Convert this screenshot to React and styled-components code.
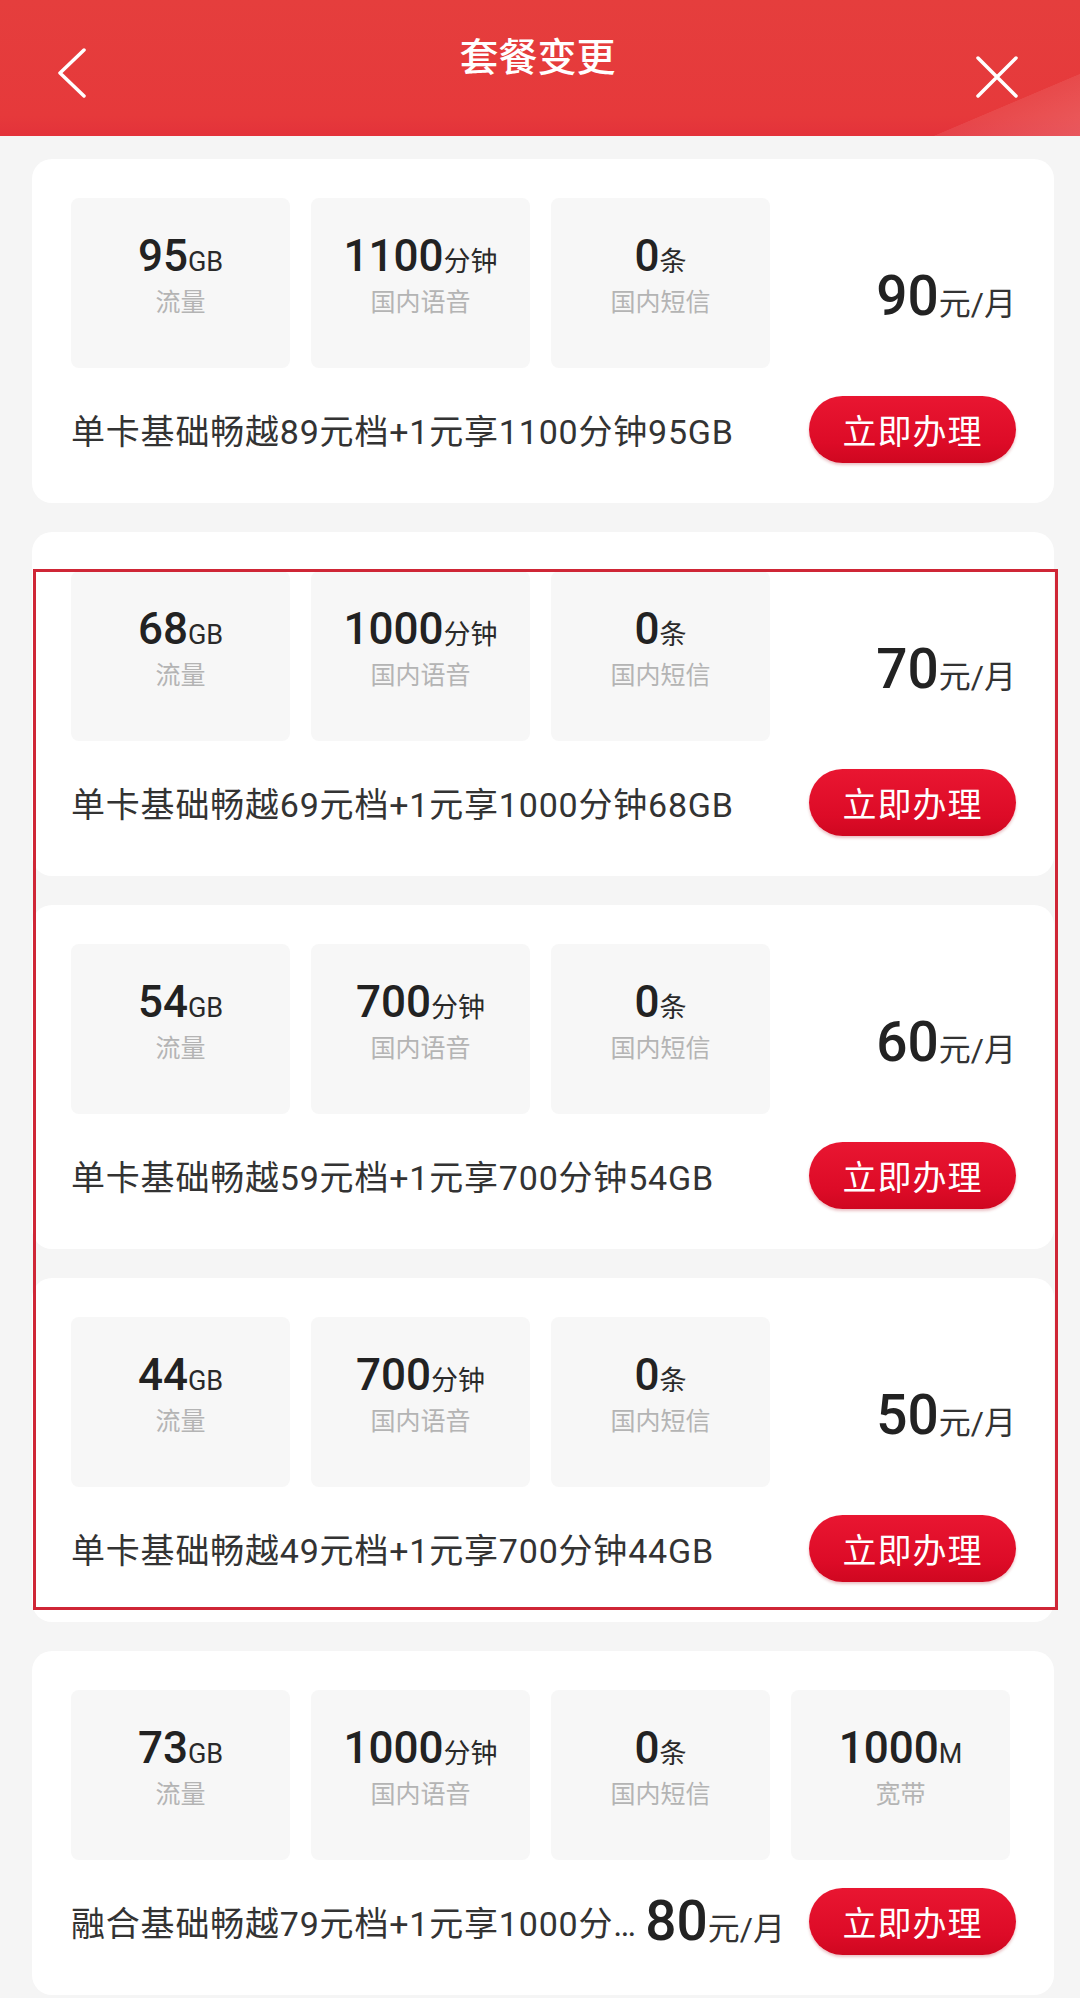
import React from 'react';
import styled, { createGlobalStyle } from 'styled-components';

const GlobalStyle = createGlobalStyle`
    body {
        margin: 0;
        background: #f5f5f5;
        font-family: Roboto, "Noto Sans CJK SC", sans-serif;
    }
`;

const Page = styled.div`
    width: 1080px;
    height: 1998px;
    overflow: hidden;
    background: #f5f5f5;
`;

const Header = styled.header`
    height: 136px;
    display: grid;
    grid-template-columns: 1fr auto 1fr;
    align-items: start;
    padding: 0 62px 0 57px;
    box-sizing: border-box;
    background:
        linear-gradient(157deg, transparent 89.5%, rgba(255, 255, 255, 0.08) 89.6%, rgba(255, 255, 255, 0.18) 100%),
        linear-gradient(180deg, #e53e3d 0%, #e6393b 85%, #e3323a 100%);
`;

const IconButton = styled.button`
    justify-self: ${p => (p.$end ? 'end' : 'start')};
    margin-top: ${p => p.$top}px;
    padding: 0;
    border: none;
    background: none;
    display: flex;
    cursor: pointer;
`;

const Title = styled.h1`
    margin: 35px 0 0;
    font-family: "Noto Sans CJK SC", sans-serif;
    font-size: 39px;
    font-weight: 500;
    line-height: 1;
    color: #fff;
`;

const List = styled.main`
    display: flex;
    flex-direction: column;
    gap: 29px;
    padding: 23px 26px 0 32px;
`;

const Highlight = styled.section`
    position: relative;
    display: flex;
    flex-direction: column;
    gap: 29px;
`;

const Frame = styled.div`
    position: absolute;
    top: 37px;
    bottom: 12px;
    left: 1px;
    right: -4px;
    border: 3px solid #cf2636;
    pointer-events: none;
`;

const Card = styled.article`
    background: #fff;
    border-radius: 20px;
    padding: 39px 38px 40px 39px;
    height: 344px;
    box-sizing: border-box;
`;

const StatRow = styled.div`
    display: flex;
    gap: 21px;
`;

const StatBox = styled.div`
    width: 219px;
    height: 170px;
    box-sizing: border-box;
    padding-top: 36px;
    border-radius: 8px;
    background: #f7f7f7;
    display: flex;
    flex-direction: column;
    align-items: center;
`;

const Value = styled.div`
    font-size: 44px;
    line-height: 1;
    font-weight: 500;
    color: #222;
    white-space: nowrap;
`;

const Unit = styled.span`
    font-size: 27px;
    font-weight: 400;
    color: #2a2a2a;
`;

const Label = styled.div`
    margin-top: 12px;
    font-size: 25px;
    line-height: 1;
    color: #b4b4b4;
`;

const Price = styled.div`
    margin-left: ${p => (p.$inline ? '0' : 'auto')};
    margin-top: ${p => (p.$inline ? '0' : '71px')};
    align-self: ${p => (p.$inline ? 'center' : 'flex-start')};
    font-size: 55px;
    line-height: 1;
    font-weight: 500;
    color: #222;
    white-space: nowrap;
    flex-shrink: 0;
`;

const PriceUnit = styled.span`
    font-size: 32px;
    font-weight: 400;
    color: #333;
`;

const BottomRow = styled.div`
    margin-top: 28px;
    display: flex;
    align-items: center;
    gap: ${p => (p.$tight ? '8px' : '20px')};
`;

const Desc = styled.div`
    flex: 1;
    min-width: 0;
    font-size: 34px;
    letter-spacing: 0.8px;
    color: #333;
    white-space: nowrap;
    overflow: hidden;
    text-overflow: ellipsis;
`;

const ApplyButton = styled.button`
    flex-shrink: 0;
    width: 207px;
    height: 67px;
    margin-left: ${p => (p.$gap ? '16px' : '0')};
    border: none;
    border-radius: 34px;
    background: linear-gradient(180deg, #e91631 0%, #dd0b27 70%, #cf0720 100%);
    box-shadow: 0 2px 3px rgba(170, 0, 20, 0.25);
    color: #fff;
    font-family: "Noto Sans CJK SC", sans-serif;
    font-size: 34px;
    letter-spacing: 1px;
    cursor: pointer;
`;

const BackIcon = () => (
    <svg width="30" height="50" viewBox="0 0 30 50" fill="none">
        <path d="M27 2 L3 25 L27 48" stroke="#fff" strokeWidth="3.5" strokeLinecap="round" strokeLinejoin="round" />
    </svg>
);

const CloseIcon = () => (
    <svg width="42" height="42" viewBox="0 0 42 42" fill="none">
        <path d="M2 2 L40 40 M40 2 L2 40" stroke="#fff" strokeWidth="3.5" strokeLinecap="round" />
    </svg>
);

const plans = [
    { gb: 95, minutes: 1100, sms: 0, price: 90, name: '单卡基础畅越89元档+1元享1100分钟95GB' },
    { gb: 68, minutes: 1000, sms: 0, price: 70, name: '单卡基础畅越69元档+1元享1000分钟68GB' },
    { gb: 54, minutes: 700, sms: 0, price: 60, name: '单卡基础畅越59元档+1元享700分钟54GB' },
    { gb: 44, minutes: 700, sms: 0, price: 50, name: '单卡基础畅越49元档+1元享700分钟44GB' },
    { gb: 73, minutes: 1000, sms: 0, price: 80, broadband: 1000, name: '融合基础畅越79元档+1元享1000分钟73GB+1000M宽带' },
];

const Stat = ({ value, unit, label }) => (
    <StatBox>
        <Value>
            {value}
            <Unit>{unit}</Unit>
        </Value>
        <Label>{label}</Label>
    </StatBox>
);

const PriceTag = ({ price, inline }) => (
    <Price $inline={inline}>
        {price}
        <PriceUnit>元/月</PriceUnit>
    </Price>
);

const PlanCard = ({ plan }) => {
    const wide = plan.broadband !== undefined;
    return (
        <Card>
            <StatRow>
                <Stat value={plan.gb} unit="GB" label="流量" />
                <Stat value={plan.minutes} unit="分钟" label="国内语音" />
                <Stat value={plan.sms} unit="条" label="国内短信" />
                {wide ? <Stat value={plan.broadband} unit="M" label="宽带" /> : <PriceTag price={plan.price} />}
            </StatRow>
            <BottomRow $tight={wide}>
                <Desc>{plan.name}</Desc>
                {wide && <PriceTag price={plan.price} inline />}
                <ApplyButton $gap={wide}>立即办理</ApplyButton>
            </BottomRow>
        </Card>
    );
};

export default function App() {
    const [first, ...rest] = plans;
    const highlighted = rest.slice(0, 3);
    const last = rest[3];
    return (
        <Page>
            <GlobalStyle />
            <Header>
                <IconButton $top={48} aria-label="返回">
                    <BackIcon />
                </IconButton>
                <Title>套餐变更</Title>
                <IconButton $end $top={56} aria-label="关闭">
                    <CloseIcon />
                </IconButton>
            </Header>
            <List>
                <PlanCard plan={first} />
                <Highlight>
                    {highlighted.map(p => (
                        <PlanCard key={p.price} plan={p} />
                    ))}
                    <Frame />
                </Highlight>
                <PlanCard plan={last} />
            </List>
        </Page>
    );
}
